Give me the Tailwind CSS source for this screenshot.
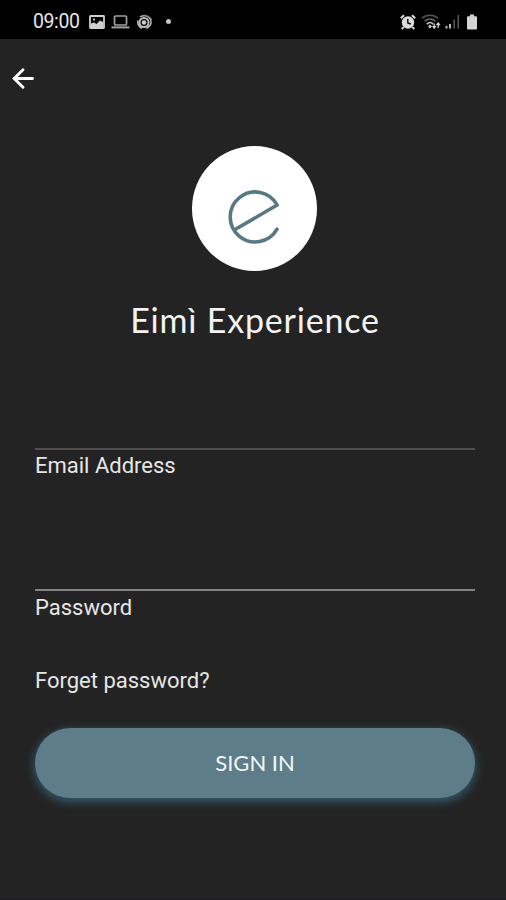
<!DOCTYPE html>
<html lang="en">
<head>
    <meta charset="UTF-8">
    <meta name="viewport" content="width=device-width, initial-scale=1.0">
    <title>Eimì Experience - Sign In</title>
    <script src="https://cdn.jsdelivr.net/npm/@tailwindcss/browser@4"></script>
</head>
<body class="bg-[#232323] font-[Roboto,sans-serif] text-[#e6e6e6]">
    <div class="h-[900px] w-[506px] flex flex-col overflow-hidden border-b border-[#211a1f]">
        <!-- Status bar -->
        <header class="h-[39px] shrink-0 bg-black flex items-center justify-between pl-[33px] pr-[28px] pt-1">
            <div class="flex items-center">
                <span class="w-[47px] text-[19.5px] leading-5 whitespace-nowrap tracking-[-0.4px]">09:00</span>
                <svg class="ml-[9px]" width="16" height="14" viewBox="0 0 16 14">
                    <rect x="1" y="1" width="14" height="12" rx="0.5" fill="none" stroke="#cfcfcf" stroke-width="1.8"/>
                    <path d="M2 11 L2 8.5 L5 7.5 L7.5 9 L11 5.5 L14 7 V12 H2Z" fill="#cfcfcf"/>
                    <circle cx="5" cy="4.5" r="1.1" fill="#cfcfcf"/>
                </svg>
                <svg class="ml-[6px]" width="19" height="14" viewBox="0 0 19 14">
                    <rect x="3.5" y="1" width="12" height="9" rx="1" fill="none" stroke="#a0a0a0" stroke-width="1.7"/>
                    <path d="M0.5 12.4H18.5" stroke="#a0a0a0" stroke-width="2"/>
                </svg>
                <svg class="ml-[7px]" width="16" height="16" viewBox="0 0 16 16" fill="none" stroke="#bdbdbd">
                    <circle cx="7" cy="8.5" r="2.3" fill="#ccc" stroke="none"/>
                    <circle cx="7" cy="8.5" r="4.5" stroke-width="2"/>
                    <path d="M3 3A6.8 6.8 0 0 1 13.4 11L9.5 14.6M1 6.5A6.3 6.3 0 0 0 5 14.2" stroke-width="1.5"/>
                    <path d="M5 2.2A8 8 0 0 1 14.8 6" stroke="#888" stroke-width="1.2"/>
                </svg>
                <span class="ml-[13px] size-[5px] rounded-full bg-[#c4c4c4]"></span>
            </div>
            <div class="flex items-center">
                <svg width="16" height="16" viewBox="0 0 16 16">
                    <circle cx="8" cy="8.5" r="6.2" fill="#dcdcdc"/>
                    <path d="M0.8 4.2L4 1.2M15.2 4.2L12 1.2M3.5 13L1.8 15.2M12.5 13L14.2 15.2" stroke="#dcdcdc" stroke-width="2"/>
                    <path d="M7.8 5V9L10.8 10" fill="none" stroke="#000" stroke-width="1.4"/>
                </svg>
                <svg class="ml-[5px]" width="20" height="16" viewBox="0 0 20 16" fill="none">
                    <path d="M1 4.2C5.5 0.3 12.5 0.3 17 4.2" stroke="#555" stroke-width="1.5"/>
                    <path d="M3.6 7.2C7 4.4 11 4.4 14.4 7.2" stroke="#666" stroke-width="1.5"/>
                    <path d="M5.8 10.2C7.8 8 10.6 8 12 10.2" stroke="#c8c8c8" stroke-width="1.6"/>
                    <path d="M9 10.4L11 12.4L9 14.4L7 12.4Z" fill="#c8c8c8"/>
                    <path d="M13.2 9.5V14M11.6 12.2L13.2 14.2L14.8 12.2M17.2 14V9.2M15.4 11.2L17.2 9L19 11.2" stroke="#d0d0d0" stroke-width="1.3"/>
                </svg>
                <svg class="ml-[4px]" width="15" height="15" viewBox="0 0 15 15">
                    <path d="M1.5 12V14.5M5 10V14.5" stroke="#ccc" stroke-width="1.8"/>
                    <path d="M9.2 5.5V14.5M13.2 1V14.5" stroke="#555" stroke-width="1.6"/>
                </svg>
                <svg class="ml-[6px]" width="12" height="16" viewBox="0 0 12 16">
                    <path d="M4 0.5H8V2.2H10.2Q11 2.2 11 3V14.6Q11 15.4 10.2 15.4H1.8Q1 15.4 1 14.6V3Q1 2.2 1.8 2.2H4Z" fill="#d4d4d4"/>
                </svg>
            </div>
        </header>

        <button aria-label="Back" class="mt-[28px] ml-[12px] size-[23px] shrink-0">
            <svg width="23" height="23" viewBox="0 0 23 23" fill="none" stroke="#fff" stroke-width="2.9" stroke-linecap="round">
                <path d="M20.5 11.5H2.5M11 2.8L2.2 11.5L11 20.2"/>
            </svg>
        </button>

        <!-- Logo -->
        <div class="mt-[56px] ml-[192px] size-[125px] shrink-0 rounded-full bg-white">
            <svg width="125" height="125" viewBox="0 0 125 125" fill="none" stroke="#587984" stroke-width="3.6" stroke-linejoin="round" stroke-linecap="round">
                <path d="M43.5 83.2L85.2 59A25 25 0 1 0 85 83.2"/>
            </svg>
        </div>
        <h1 class="mt-[28px] h-[42px] shrink-0 pl-1 text-center text-[34px] leading-[42px] font-[Lato,sans-serif] text-[#f2f2f2] tracking-[0.8px]">Eimì Experience</h1>

        <!-- Sign in form -->
        <form class="flex flex-col pl-[35px] pr-[31px] mt-[59px] text-[22px] leading-7">
            <input type="email" id="email" class="h-[50px] w-full border-b-2 border-[#505050] outline-none">
            <label for="email" class="mt-[2px] h-7">Email Address</label>
            <input type="password" id="password" class="mt-[61px] h-[50px] w-full border-b-2 border-[#858585] outline-none">
            <label for="password" class="mt-[3px] h-7">Password</label>
            <a href="#" class="mt-[45px] h-7">Forget password?</a>
            <button type="submit" class="mt-[33px] h-[70px] rounded-full bg-[#5d7d88] shadow-[0_3px_10px_1px_#36596a] font-[Lato,sans-serif] text-[22px] text-[#f2f6fa]">SIGN IN</button>
        </form>
    </div>
</body>
</html>
